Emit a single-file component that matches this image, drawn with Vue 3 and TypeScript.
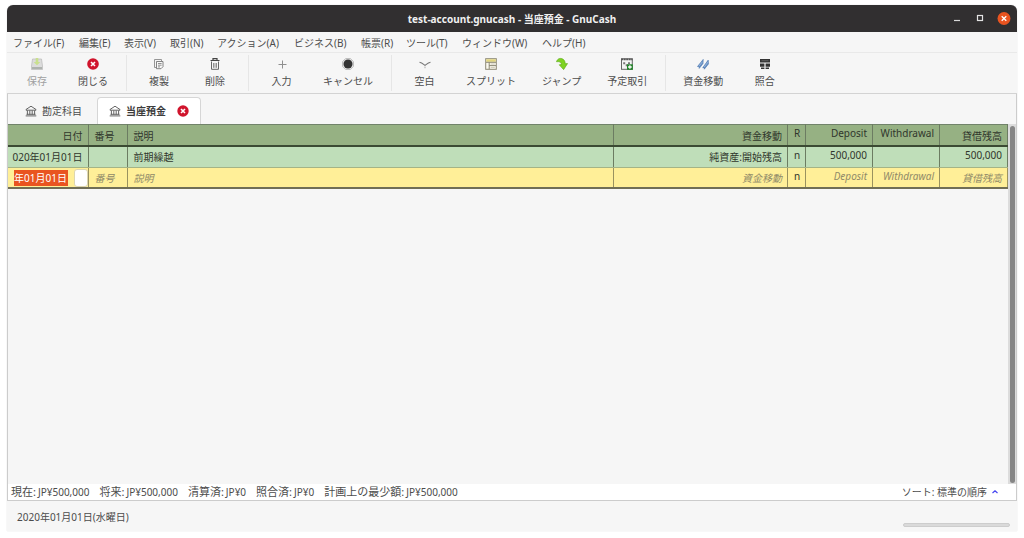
<script setup lang="ts">
interface Tool {
  label: string
  icon: string
  disabled?: boolean
}
interface Total {
  label: string
  value: string
}

const menus: string[] = [
  'ファイル(F)', '編集(E)', '表示(V)', '取引(N)', 'アクション(A)',
  'ビジネス(B)', '帳票(R)', 'ツール(T)', 'ウィンドウ(W)', 'ヘルプ(H)',
]

const toolGroups: Tool[][] = [
  [{ label: '保存', icon: 'save', disabled: true }, { label: '閉じる', icon: 'close' }],
  [{ label: '複製', icon: 'copy' }, { label: '削除', icon: 'trash' }],
  [{ label: '入力', icon: 'plus' }, { label: 'キャンセル', icon: 'stop' }],
  [
    { label: '空白', icon: 'blank' }, { label: 'スプリット', icon: 'split' },
    { label: 'ジャンプ', icon: 'jump' }, { label: '予定取引', icon: 'schedule' },
  ],
  [{ label: '資金移動', icon: 'transfer' }, { label: '照合', icon: 'reconcile' }],
]

const totals: Total[] = [
  { label: '現在:', value: 'JP¥500,000' },
  { label: '将来:', value: 'JP¥500,000' },
  { label: '清算済:', value: 'JP¥0' },
  { label: '照合済:', value: 'JP¥0' },
  { label: '計画上の最少額:', value: 'JP¥500,000' },
]

const entryDate = '年01月01日'
</script>

<template>
  <div class="desktop">
    <div class="window">
      <header class="titlebar">
        <h1>test-account.gnucash - 当座預金 - GnuCash</h1>
        <div class="controls">
          <button type="button" aria-label="最小化">
            <svg width="12" height="12" viewBox="0 0 12 12"><path d="M3 7.5h6" stroke="#d8d8d8" stroke-width="1.2" /></svg>
          </button>
          <button type="button" aria-label="最大化">
            <svg width="12" height="12" viewBox="0 0 12 12"><rect x="3.5" y="2.5" width="5" height="5" fill="none" stroke="#e4e4e4" stroke-width="1.2" /></svg>
          </button>
          <button type="button" aria-label="ウィンドウを閉じる">
            <svg width="14" height="14" viewBox="0 0 14 14"><circle cx="7" cy="6.5" r="6.5" fill="#e95420" /><path d="M4.7 4.2l4.6 4.6M9.3 4.2L4.7 8.8" stroke="#fff" stroke-width="1.3" /></svg>
          </button>
        </div>
      </header>

      <nav class="menubar">
        <button v-for="menu in menus" :key="menu" type="button">{{ menu }}</button>
      </nav>

      <div class="toolbar">
        <div v-for="(group, index) in toolGroups" :key="index" class="group">
          <button v-for="tool in group" :key="tool.label" type="button" class="tool" :disabled="tool.disabled">
            <svg class="icon" width="14" height="14" viewBox="0 0 14 14" fill="none" aria-hidden="true">
              <template v-if="tool.icon === 'save'">
                <path d="M2.5 2h9l1 7v3.5h-11V9z" fill="#dcdcdc" stroke="#b9b9b9" stroke-width=".7" />
                <path d="M2 10h10v2H2z" fill="#aeb2ae" />
                <path d="M5.7 1h2.6v4h2L7 8.3 3.7 5h2z" fill="#c9e08e" />
              </template>
              <template v-else-if="tool.icon === 'close'">
                <circle cx="7" cy="7" r="5.8" fill="#d0142c" />
                <path d="M5 5l4 4M9 5L5 9" stroke="#fff" stroke-width="1.6" />
              </template>
              <template v-else-if="tool.icon === 'copy'">
                <path d="M4.5 10.5h-2v-8h7v1.5" stroke="#8b8b8b" stroke-width=".9" />
                <path d="M4.5 4.5h6.5v5.2L9 11.7H4.5z" fill="#f8f8f8" stroke="#777" stroke-width=".9" />
                <path d="M6 6.5h3.6M6 8.2h3.6M6 9.9h2" stroke="#777" stroke-width=".8" />
              </template>
              <template v-else-if="tool.icon === 'trash'">
                <path d="M2.5 3.5h9M5 3V1.7h4V3" stroke="#444" stroke-width="1.2" />
                <path d="M3.5 4.5v7.8h7V4.5" stroke="#666" />
                <path d="M5.5 6v4.8M7 6v4.8M8.5 6v4.8" stroke="#777" stroke-width=".8" />
              </template>
              <path v-else-if="tool.icon === 'plus'" d="M7.5 3.5v8M3.5 7.5h8" stroke="#8f8f8f" />
              <template v-else-if="tool.icon === 'stop'">
                <path d="M4.6 1.5h4.8l3.1 3.1v4.8l-3.1 3.1H4.6L1.5 9.4V4.6z" fill="#e6e6e6" stroke="#b4b4b4" stroke-width=".8" />
                <circle cx="7" cy="7" r="4.5" fill="#333" />
              </template>
              <template v-else-if="tool.icon === 'blank'">
                <path d="M1.5 5.2C4 5.6 5.4 7.2 7 8.4c1.6-1.2 3-2.8 5.5-3.2" stroke="#777" stroke-width="1.1" />
                <path d="M7 9.6v1.6" stroke="#aaa" />
              </template>
              <template v-else-if="tool.icon === 'split'">
                <rect x="1.7" y="1.7" width="10.6" height="10.6" fill="#faf8ee" stroke="#8c8874" />
                <path d="M2.3 2.3h9.4v2.5H2.3z" fill="#e2d67c" />
                <path d="M2 5.3h10M5.2 5.2V12M5 8.6h7" stroke="#8c8874" />
                <path d="M6.6 7h4.2M6.6 10.4h4.2" stroke="#c3bda8" stroke-width=".8" />
              </template>
              <path v-else-if="tool.icon === 'jump'" d="M1.5 4.7C2.6 1.5 5 .9 7.2 1.8c2.1.9 3 2.7 3 5l2.3-.2-3.9 6-4.3-4.8 2.2-.2c0-2.2-1.7-3.4-5-2.9z" fill="#7ed321" stroke="#5caa13" stroke-width=".7" stroke-linejoin="round" />
              <template v-else-if="tool.icon === 'schedule'">
                <rect x="1.5" y="1.8" width="10.8" height="10.5" fill="#f4f4f4" stroke="#666" />
                <path d="M1.2 2.3h11.4" stroke="#555" stroke-width="1.8" stroke-dasharray="2 .5" />
                <path d="M3.2 5.3h2v2h-2zM5.7 7.3h2v2h-2zM8 5.2h2v2H8z" fill="#777" />
                <rect x="7" y="7.3" width="5.8" height="5.5" fill="#22842a" />
                <path d="M9.9 8.3v3.5M8.1 10h3.6" stroke="#fff" stroke-width="1.3" />
              </template>
              <template v-else-if="tool.icon === 'transfer'">
                <path d="M1.5 9.5l5.7-7.1-.2 4.2-3.8 4.8-.2-2zM6.7 10.8l5.5-7.7.3 3.8-4.2 5.3-.3-1.8z" fill="#668fc4" stroke="#4876ae" stroke-width=".6" />
                <path d="M3 9L6.5 4.8M8.2 10L12 5" stroke="#a9c3e4" stroke-width=".7" />
              </template>
              <template v-else>
                <path d="M2 2h10v3.5H2zM2 6.5h4.4v3.3H2zM7.6 6.5H12v3.3H7.6zM3 10.6h3.4V12H3zM7.6 10.6H11V12H7.6z" fill="#343434" />
                <path d="M3.5 3.7h7" stroke="#777" stroke-width=".6" />
              </template>
            </svg>
            <span>{{ tool.label }}</span>
          </button>
        </div>
      </div>

      <div class="tabs" role="tablist">
        <button v-for="tab in ['勘定科目', '当座預金']" :key="tab" type="button" role="tab" class="tab" :aria-selected="tab === '当座預金'">
          <svg width="12" height="12" viewBox="0 0 12 12" fill="none" stroke="#555" aria-hidden="true">
            <path d="M1 5.2V4.5L6 1.2l5 3.3v.7zM2.4 5.5v4M4.8 5.5v4M7.2 5.5v4M9.6 5.5v4M1.5 9.3h9M.7 10.9h10.6" stroke-width=".9" />
          </svg>
          <span>{{ tab }}</span>
          <svg v-if="tab === '当座預金'" class="tab-close" width="12" height="12" viewBox="0 0 12 12" role="img" aria-label="閉じる">
            <circle cx="6" cy="6" r="5.7" fill="#d0142c" />
            <path d="M4 4l4 4M8 4L4 8" stroke="#fff" stroke-width="1.6" />
          </svg>
        </button>
      </div>

      <main class="page">
        <div class="sheet">
          <table>
            <colgroup>
              <col class="c-date" /><col class="c-num" /><col /><col class="c-transfer" />
              <col class="c-flag" /><col class="c-money" /><col class="c-money" /><col class="c-balance" />
            </colgroup>
            <thead>
              <tr>
                <th class="end" scope="col">日付</th>
                <th scope="col">番号</th>
                <th scope="col">説明</th>
                <th class="end" scope="col">資金移動</th>
                <th class="latin" scope="col">R</th>
                <th class="end latin" scope="col">Deposit</th>
                <th class="end latin" scope="col">Withdrawal</th>
                <th class="end" scope="col">貸借残高</th>
              </tr>
            </thead>
            <tbody>
              <tr class="posted">
                <td class="end">020年01月01日</td>
                <td></td>
                <td>前期繰越</td>
                <td class="end">純資産:開始残高</td>
                <td class="latin">n</td>
                <td class="end latin">500,000</td>
                <td></td>
                <td class="end latin">500,000</td>
              </tr>
              <tr class="entry">
                <td class="edit">
                  <div class="date-edit">
                    <input type="text" :value="entryDate" aria-label="日付" />
                    <button type="button" aria-label="カレンダーを開く"></button>
                  </div>
                </td>
                <td class="hint">番号</td>
                <td class="hint">説明</td>
                <td class="hint end">資金移動</td>
                <td class="latin">n</td>
                <td class="hint end latin">Deposit</td>
                <td class="hint end latin">Withdrawal</td>
                <td class="hint end">貸借残高</td>
              </tr>
            </tbody>
          </table>
        </div>
        <div class="scrollbar"><div class="thumb"></div></div>
      </main>

      <div class="summary">
        <span v-for="total in totals" :key="total.label" class="total"><span class="total-label">{{ total.label }}</span><span>{{ total.value }}</span></span>
        <span class="sort">ソート: 標準の順序
          <svg width="8" height="8" viewBox="0 0 8 8" fill="none" aria-hidden="true"><path d="M1.5 5L4 2.8 6.5 5" stroke="#4545f0" stroke-width="1.2" /></svg>
        </span>
      </div>

      <footer class="statusbar">
        <span>2020年01月01日(水曜日)</span>
        <div class="progress" role="progressbar" aria-label="進捗"></div>
      </footer>
    </div>
  </div>
</template>

<style>
body {
  margin: 0;
  background: #fff;
}
</style>

<style scoped>
.desktop,
.desktop * {
  box-sizing: border-box;
}
.desktop {
  display: flex;
  min-height: 100vh;
  padding: 5px 7px 7px;
  font: 10px/14px "Noto Sans", "Noto Sans CJK JP", sans-serif;
  color: #4c4c4c;
}
button,
input {
  margin: 0;
  padding: 0;
  border: 0;
  background: none;
  font: inherit;
  color: inherit;
}
svg {
  display: block;
  flex: none;
}
.window {
  display: flex;
  flex: 1;
  flex-direction: column;
  min-width: 0;
  background: #f6f6f6;
  border-radius: 6px 6px 0 0;
  box-shadow: 0 0 1px #bbb;
}
.titlebar {
  display: grid;
  grid-template-columns: 1fr auto 1fr;
  align-items: center;
  height: 27px;
  padding: 0 6px;
  background: #312f30;
  border-radius: 6px 6px 0 0;
  color: #f0f0f0;
}
h1 {
  grid-column: 2;
  margin: 0;
  font-size: 10px;
  font-weight: 700;
}
.controls {
  display: flex;
  align-items: center;
  justify-content: flex-end;
  gap: 11px;
}
.menubar {
  display: grid;
  grid-template-columns: 66px 45px 46px 47px 77px 67px 45px 56px 80px auto;
  justify-content: start;
  height: 21px;
  padding: 1px 6px 0;
  border-bottom: 1px solid #e9e9e9;
}
.menubar button {
  text-align: left;
  white-space: nowrap;
}
.toolbar {
  display: flex;
  height: 41px;
  padding: 2px;
  border-bottom: 1px solid #d3d3d3;
}
.group {
  display: flex;
}
.group + .group {
  margin-left: 5px;
  padding-left: 4px;
  border-left: 1px solid #e6e6e6;
}
.tool {
  display: flex;
  flex-direction: column;
  align-items: center;
  gap: 3px;
  min-width: 56px;
  padding: 2px 13px;
  white-space: nowrap;
}
.group:nth-child(n + 3) .tool {
  min-width: 57px;
}
.tool:disabled {
  color: #a0a0a0;
}
.tabs {
  display: flex;
  height: 30px;
  padding: 3px 10px 0;
  border-left: 1px solid #ccc;
  border-right: 1px solid #ccc;
}
.tab {
  display: flex;
  align-items: center;
  gap: 5px;
  padding: 0 15px 0 7px;
}
.tab[aria-selected='true'] {
  padding: 0 11px;
  background: #fff;
  border: 1px solid #d6d6d6;
  border-bottom: 0;
  border-radius: 4px 4px 0 0;
  font-weight: 700;
  color: #3c3c3c;
}
.tab-close {
  margin-left: 6px;
}
.page {
  display: flex;
  flex: 1;
  border-left: 1px solid #ccc;
  border-right: 1px solid #ccc;
}
.sheet {
  flex: 1;
  min-width: 0;
}
table {
  width: 100%;
  border-collapse: collapse;
  table-layout: fixed;
  color: #30362c;
}
.c-date { width: 80px; }
.c-num { width: 39px; }
.c-transfer { width: 174px; }
.c-flag { width: 18px; }
.c-money { width: 67px; }
.c-balance { width: 68px; }
th,
td {
  height: 21px;
  padding: 3px 5px 2px 6px;
  border-right: 1px solid #6c7c62;
  font-weight: 400;
  text-align: left;
  vertical-align: top;
  white-space: nowrap;
}
th {
  padding-top: 4px;
  background: #96b183;
  border-top: 1px solid #71836a;
  border-bottom: 2px solid #3b4a33;
}
.posted td {
  background: #bfdeb9;
  border-bottom: 1px solid #a4b486;
}
.entry td {
  background: #ffef98;
  border-right-color: #9a925f;
  border-bottom: 2px solid #706e55;
}
th.end,
td.end {
  padding-left: 2px;
  text-align: right;
}
th.latin,
td.latin {
  padding-top: 1px;
}
.entry .hint {
  font-style: italic;
  color: #8f8a68;
}
.entry .edit {
  padding: 1px 0 0 6px;
}
.date-edit {
  display: flex;
  align-items: center;
  justify-content: space-between;
}
.date-edit input {
  width: 54px;
  height: 16px;
  background: #e95420;
  color: #fff;
}
.date-edit button {
  width: 14px;
  height: 18px;
  background: #fff;
  border: 1px solid #ddd6b0;
  border-radius: 3px;
}
.scrollbar {
  width: 8px;
  padding: 2px 1px 1px 2px;
  background: #dcdcdc;
}
.thumb {
  height: 100%;
  background: #868686;
  border-radius: 3px;
}
.summary {
  display: flex;
  align-items: center;
  gap: 10px;
  height: 17px;
  padding: 0 17px 0 3px;
  background: #fff;
  border: 1px solid #ccc;
  border-top: 0;
}
.total {
  display: flex;
  gap: 2px;
}
.total-label {
  font-size: 11px;
}
.sort {
  display: flex;
  align-items: center;
  gap: 4px;
  margin-left: auto;
}
.statusbar {
  display: flex;
  justify-content: space-between;
  height: 30px;
  padding: 9px 7px 4px 10px;
}
.progress {
  align-self: flex-end;
  width: 107px;
  height: 4px;
  background: #dadada;
  border: 1px solid #cdcdcd;
  border-radius: 2px;
}
</style>
